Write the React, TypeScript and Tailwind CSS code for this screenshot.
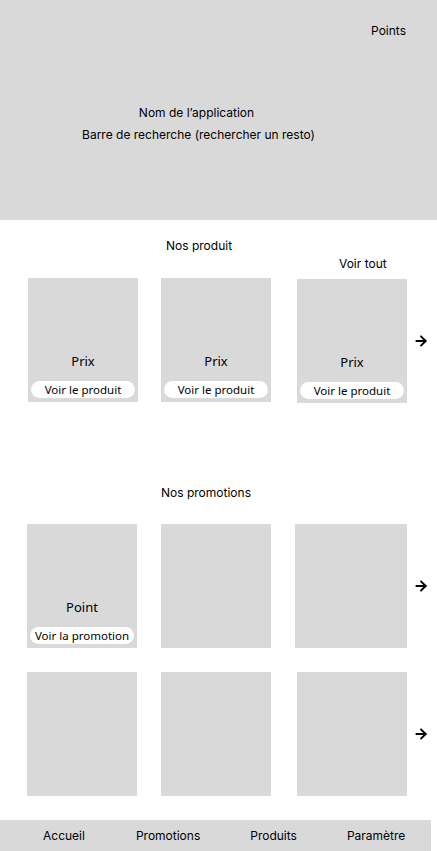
import { ArrowRight } from "lucide-react"

const ui = { fontFamily: "Inter, 'Noto Sans', sans-serif" }
const card = { fontFamily: "'Noto Sans', Inter, sans-serif" }

function Carte({ titre, bouton, className = "" }: { titre?: string; bouton?: string; className?: string }) {
  return (
    <div className={"w-[110px] h-[124px] bg-[#d9d9d9] flex flex-col items-center justify-end pb-[4px] shrink-0 " + className}>
      {titre && <div className="text-[13px] leading-[18px] text-black mb-[11px]" style={card}>{titre}</div>}
      {bouton && (
        <div className="w-[104px] h-[17px] bg-white rounded-full flex items-center justify-center text-[11.5px] text-black" style={card}>
          {bouton}
        </div>
      )}
    </div>
  )
}

function Fleche() {
  return (
    <div className="ml-[6px] w-[16px] flex items-center">
      <ArrowRight size={16} strokeWidth={2.75} className="text-black" />
    </div>
  )
}

export default function App() {
  return (
    <div className="w-[437px] h-[851px] bg-white flex flex-col text-black" style={ui}>
      {/* Header */}
      <div className="h-[220px] bg-[#d9d9d9] flex flex-col shrink-0">
        <div className="pt-[23px] pr-[31px] text-right text-[12px] leading-[16px]">Points</div>
        <div className="mt-[63px] flex flex-col items-center text-[12px] leading-[22px] pr-[40px]">
          <div className="pr-[4px]">Nom de l’application</div>
          <div>Barre de recherche (rechercher un resto)</div>
        </div>
      </div>

      {/* Produits */}
      <div className="pt-[18px] flex flex-col">
        <div className="pl-[166px] text-[12px] leading-[16px]">Nos produit</div>
        <div className="pl-[339px] mt-[2px] text-[12px] leading-[16px]">Voir tout</div>
        <div className="mt-[6px] flex pl-[28px]">
          <Carte titre="Prix" bouton="Voir le produit" />
          <Carte titre="Prix" bouton="Voir le produit" className="ml-[23px]" />
          <Carte titre="Prix" bouton="Voir le produit" className="ml-[26px] mt-[1px]" />
          <Fleche />
        </div>
      </div>

      {/* Promotions */}
      <div className="pt-[82px] flex flex-col">
        <div className="pl-[161px] text-[12px] leading-[16px]">Nos promotions</div>
        <div className="mt-[23px] flex pl-[27px]">
          <Carte titre="Point" bouton="Voir la promotion" />
          <Carte className="ml-[24px]" />
          <Carte className="ml-[24px] w-[112px]" />
          <Fleche />
        </div>
        <div className="mt-[24px] flex pl-[27px]">
          <Carte />
          <Carte className="ml-[24px]" />
          <Carte className="ml-[26px]" />
          <Fleche />
        </div>
      </div>

      {/* Navigation */}
      <div className="mt-auto h-[31px] w-[431px] bg-[#d9d9d9] flex items-center text-[12px] leading-[16px]">
        <div className="pl-[43px]">Accueil</div>
        <div className="pl-[51px]">Promotions</div>
        <div className="pl-[50px]">Produits</div>
        <div className="pl-[50px]">Paramètre</div>
      </div>
    </div>
  )
}
